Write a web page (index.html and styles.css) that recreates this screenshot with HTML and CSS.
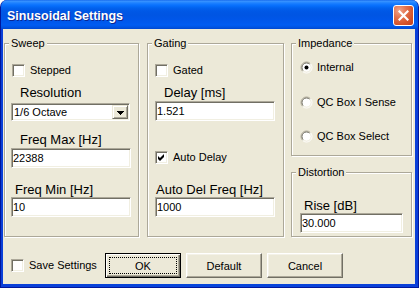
FILE: index.html
```html
<!DOCTYPE html>
<html>
<head>
<meta charset="utf-8">
<link rel="stylesheet" href="styles.css">
</head>
<body>
<div class="window">
  <div class="titlebar">
    <span class="title">Sinusoidal Settings</span>
    <button class="close" aria-label="Close">
      <svg width="11" height="11" viewBox="0 0 11 11"><path d="M1.5 1.5 L9.5 9.5 M9.5 1.5 L1.5 9.5" stroke="#fff" stroke-width="2.2" stroke-linecap="square"/></svg>
    </button>
  </div>
  <div class="client">
    <div class="groups">
      <fieldset class="group sweep">
        <legend>Sweep</legend>
        <label class="check m-check"><span class="cb"></span>Stepped</label>
        <div class="cap cap-res">Resolution</div>
        <div class="combo">
          <span class="combo-text">1/6 Octave</span>
          <span class="combo-btn"><svg width="7" height="4" viewBox="0 0 7 4"><path d="M0 0h7v1h-1v1h-1v1h-1v1h-1v-1h-1v-1h-1v-1h-1z" fill="#000"/></svg></span>
        </div>
        <div class="cap cap-fmax">Freq Max [Hz]</div>
        <div class="edit edit-sweep">22388</div>
        <div class="cap cap-fmin">Freq Min [Hz]</div>
        <div class="edit edit-sweep">10</div>
      </fieldset>

      <fieldset class="group gating">
        <legend>Gating</legend>
        <label class="check m-check"><span class="cb"></span>Gated</label>
        <div class="cap cap-delay">Delay [ms]</div>
        <div class="edit edit-gate edit-delay">1.521</div>
        <label class="check m-auto"><span class="cb"><svg width="11" height="11" viewBox="0 0 11 11"><path d="M2 4 L4 6 L8 2 L8 5 L4 9 L2 7 Z" fill="#000"/></svg></span>Auto Delay</label>
        <div class="cap cap-adf">Auto Del Freq [Hz]</div>
        <div class="edit edit-gate">1000</div>
      </fieldset>

      <div class="col3">
        <fieldset class="group impedance">
          <legend>Impedance</legend>
          <label class="radio r1"><span class="rb"><svg width="13" height="13" viewBox="0 0 13 13"><circle cx="6.5" cy="6.5" r="4.5" fill="#fff"/><path d="M2.6 10.4 A5.5 5.5 0 0 1 10.4 2.6" fill="none" stroke="#aca899"/><path d="M10.4 2.6 A5.5 5.5 0 0 1 2.6 10.4" fill="none" stroke="#ffffff"/><path d="M3.3 9.7 A4.5 4.5 0 0 1 9.7 3.3" fill="none" stroke="#716f64"/><path d="M9.7 3.3 A4.5 4.5 0 0 1 3.3 9.7" fill="none" stroke="#f1efe2"/><circle cx="6.5" cy="6.5" r="2" fill="#000"/></svg></span>Internal</label>
          <label class="radio r2"><span class="rb"><svg width="13" height="13" viewBox="0 0 13 13"><circle cx="6.5" cy="6.5" r="4.5" fill="#fff"/><path d="M2.6 10.4 A5.5 5.5 0 0 1 10.4 2.6" fill="none" stroke="#aca899"/><path d="M10.4 2.6 A5.5 5.5 0 0 1 2.6 10.4" fill="none" stroke="#ffffff"/><path d="M3.3 9.7 A4.5 4.5 0 0 1 9.7 3.3" fill="none" stroke="#716f64"/><path d="M9.7 3.3 A4.5 4.5 0 0 1 3.3 9.7" fill="none" stroke="#f1efe2"/></svg></span>QC Box I Sense</label>
          <label class="radio r3"><span class="rb"><svg width="13" height="13" viewBox="0 0 13 13"><circle cx="6.5" cy="6.5" r="4.5" fill="#fff"/><path d="M2.6 10.4 A5.5 5.5 0 0 1 10.4 2.6" fill="none" stroke="#aca899"/><path d="M10.4 2.6 A5.5 5.5 0 0 1 2.6 10.4" fill="none" stroke="#ffffff"/><path d="M3.3 9.7 A4.5 4.5 0 0 1 9.7 3.3" fill="none" stroke="#716f64"/><path d="M9.7 3.3 A4.5 4.5 0 0 1 3.3 9.7" fill="none" stroke="#f1efe2"/></svg></span>QC Box Select</label>
        </fieldset>
        <fieldset class="group distortion">
          <legend>Distortion</legend>
          <div class="cap cap-rise">Rise [dB]</div>
          <div class="edit edit-rise">30.000</div>
        </fieldset>
      </div>
    </div>

    <div class="bottom">
      <label class="check save"><span class="cb"></span>Save Settings</label>
      <div class="buttons">
        <button class="btn default"><span class="focus">OK</span></button>
        <button class="btn">Default</button>
        <button class="btn">Cancel</button>
      </div>
    </div>
  </div>
</div>
</body>
</html>
```

FILE: styles.css
```css
html, body {
  margin: 0;
  padding: 0;
  background: #ffffff;
}

body {
  font-family: "Liberation Sans", Arial, sans-serif;
  font-size: 11px;
  color: #000;
}

.window {
  width: 419px;
  height: 288px;
  box-sizing: border-box;
  display: flex;
  flex-direction: column;
  background: linear-gradient(to right, #0a3fd8, #0746dc 50%, #0a3fd8);
  border: 1px solid #00169b;
  border-top: 0;
  border-radius: 7px 7px 0 0;
  overflow: hidden;
}

.titlebar {
  height: 29px;
  flex: none;
  display: flex;
  justify-content: space-between;
  align-items: flex-start;
  padding: 0 4px 0 6px;
  background: linear-gradient(to bottom,
    #0a5ee8 0px, #3d95ff 1px, #2b8bff 2px, #1379ff 4px, #056dfb 6px,
    #0262ee 8px, #0058e6 11px, #0055e3 15px, #0056e8 19px, #0059ee 23px,
    #005cf2 25px, #0055e4 27px, #0047d0 29px);
}

.title {
  margin-top: 9px;
  color: #fff;
  font-weight: bold;
  font-size: 12.5px;
  line-height: 15px;
  text-shadow: 1px 1px 0 #0c2690;
  white-space: nowrap;
}

.close {
  margin-top: 5px;
  width: 21px;
  height: 21px;
  box-sizing: border-box;
  padding: 0;
  border: 1px solid #fff;
  border-radius: 3px;
  background: radial-gradient(circle at 28% 25%, #f0a68c 0, #e3734f 35%, #d4532a 70%, #c24020 100%);
  display: flex;
  align-items: center;
  justify-content: center;
}

.client {
  flex: 1;
  margin: 0 3px 3px 2px;
  background: #ece9d8;
  padding-top: 8px;
  display: flex;
  flex-direction: column;
}

.groups {
  display: flex;
  align-items: flex-start;
  margin-left: 1px;
}

.group {
  margin: 0;
  padding: 0;
  min-width: 0;
  box-sizing: border-box;
  border: 1px solid #aca899;
  box-shadow: inset 1px 1px 0 #fff, 1px 1px 0 #fff;
  display: flex;
  flex-direction: column;
  align-items: flex-start;
}

.group legend {
  margin-left: 4px;
  padding: 0 2px;
  line-height: 13px;
  font-size: 11px;
  background: #ece9d8;
}

.sweep {
  width: 135px;
  height: 200px;
}

.gating {
  width: 137px;
  height: 200px;
  margin-left: 8px;
}

.col3 {
  width: 121px;
  margin-left: 7px;
  display: flex;
  flex-direction: column;
}

.impedance {
  height: 119px;
}

.distortion {
  height: 71px;
  margin-top: 10px;
}

/* checkboxes */
.check {
  display: flex;
  align-items: center;
  gap: 5px;
  height: 17px;
  line-height: 13px;
  padding-left: 7px;
}

.cb {
  width: 13px;
  height: 13px;
  box-sizing: border-box;
  flex: none;
  background: #fff;
  border: 1px solid;
  border-color: #aca899 #fff #fff #aca899;
  box-shadow: inset 1px 1px 0 #716f64, inset -1px -1px 0 #f1efe2;
  display: flex;
}

.cb svg {
  display: block;
}

.m-check { margin-top: 12px; }
.m-auto { margin-top: 28px; }

/* radios */
.radio {
  display: flex;
  align-items: center;
  gap: 4px;
  height: 15px;
  line-height: 13px;
  padding-left: 8px;
}

.rb {
  width: 13px;
  height: 13px;
  display: flex;
  flex: none;
}

.r1 { margin-top: 10px; }
.r2 { margin-top: 20px; }
.r3 { margin-top: 19px; }

/* captions */
.cap {
  font-size: 13px;
  line-height: 14px;
  white-space: nowrap;
}

.cap-res { margin-top: 7px; padding-left: 15px; }
.cap-fmax { margin-top: 12px; padding-left: 15px; }
.cap-fmin { margin-top: 15px; padding-left: 10px; }
.cap-delay { margin-top: 7px; padding-left: 16px; }
.cap-adf { margin-top: 17px; padding-left: 8px; }
.cap-rise { margin-top: 20px; padding-left: 12px; }

/* edit fields */
.edit {
  box-sizing: border-box;
  height: 20px;
  background: #fff;
  border: 1px solid;
  border-color: #aca899 #fff #fff #aca899;
  box-shadow: inset 1px 1px 0 #716f64, inset -1px -1px 0 #f1efe2;
  padding: 1px 0 0 1px;
  line-height: 16px;
  font-size: 11px;
}

.edit-sweep { width: 120px; margin-left: 6px; margin-top: 1px; }
.cap-fmin + .edit-sweep { margin-top: 0; }
.edit-gate { width: 120px; margin-left: 7px; }
.edit-delay { margin-top: 1px; }
.edit-rise { width: 103px; margin-left: 8px; }

/* combo */
.combo {
  box-sizing: border-box;
  width: 119px;
  height: 18px;
  margin-top: 3px;
  margin-left: 6px;
  background: #fff;
  border: 1px solid;
  border-color: #aca899 #fff #fff #aca899;
  box-shadow: inset 1px 1px 0 #716f64, inset -1px -1px 0 #f1efe2;
  padding: 1px;
  display: flex;
}

.combo-text {
  flex: 1;
  padding-left: 1px;
  line-height: 14px;
}

.combo-btn {
  width: 16px;
  height: 14px;
  box-sizing: border-box;
  background: #ece9d8;
  border: 1px solid;
  border-color: #ece9d8 #716f64 #716f64 #ece9d8;
  box-shadow: inset 1px 1px 0 #fff, inset -1px -1px 0 #aca899;
  display: flex;
  align-items: center;
  justify-content: center;
}

.combo-btn svg {
  display: block;
  margin-top: 1px;
}

/* bottom row */
.bottom {
  margin-top: 16px;
  display: flex;
  align-items: center;
  height: 25px;
}

.save {
  width: 94px;
  padding-left: 8px;
  flex: none;
}

.buttons {
  display: flex;
  gap: 5px;
}

.btn {
  width: 76px;
  height: 25px;
  box-sizing: border-box;
  margin: 0;
  padding: 0;
  font-family: "Liberation Sans", Arial, sans-serif;
  font-size: 11px;
  color: #000;
  background: #ece9d8;
  border: 1px solid;
  border-color: #fff #716f64 #716f64 #fff;
  box-shadow: inset -1px -1px 0 #aca899, inset 1px 1px 0 #f4f2e8;
}

.btn.default {
  border: 1px solid #000;
  box-shadow: inset 1px 1px 0 #fff, inset -1px -1px 0 #716f64, inset -2px -2px 0 #aca899;
  padding: 3px;
  display: flex;
}

.focus {
  flex: 1;
  border: 1px dotted #000;
  display: flex;
  align-items: center;
  justify-content: center;
}
```
